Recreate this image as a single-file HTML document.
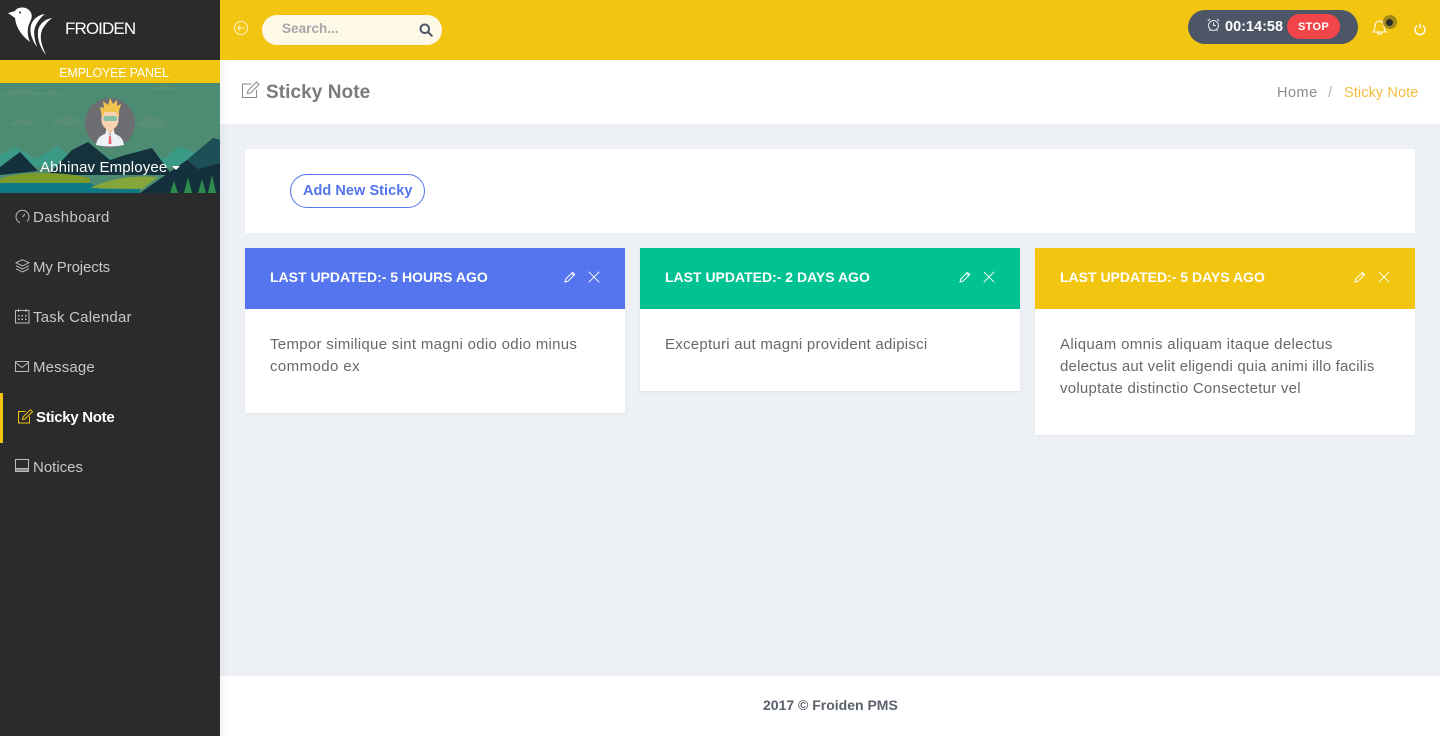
<!DOCTYPE html>
<html lang="en"><head><meta charset="utf-8"><title>Sticky Note</title>
<style>
*{box-sizing:border-box}
html,body{margin:0;padding:0;width:1440px;height:736px;overflow:hidden;background:#edf1f5;font-family:"Liberation Sans",sans-serif}
.a{position:absolute}
.t{position:absolute;white-space:nowrap;line-height:20px}
svg{position:absolute;display:block;overflow:visible}
.nav{color:#c6c8cb;font-size:15px}
.i{fill:none;stroke:#b8babd;stroke-width:1}
.body{color:#686868;font-size:15px}
.hd{color:#fff;font-size:14px;font-weight:700}
.card{position:absolute;top:248px;width:380px;background:#fff;box-shadow:0 1px 3px rgba(0,0,0,.06)}
</style></head><body>
<!-- sidebar -->
<div class="a" style="left:0;top:0;width:220px;height:736px;background:#2b2b2b"></div>
<svg style="left:0;top:0" width="70" height="60" viewBox="0 0 70 60"><g fill="#fff">
<path d="M8 13 L15 11 C17 7 25 6 29 10 C33 14 32 18 30 22 C27 28 27 35 30 42 C22 36 16 28 15 18 Z"/>
<path d="M45 14 C38 15 33 19 31 25 C29 32 32 40 37 47 C34 38 33 30 36 25 C38 21 41 17 45 14Z"/>
<path d="M52 18 C45 19 39 24 38 31 C37 40 41 49 46 55 C42 46 39 38 42 30 C44 26 48 21 52 18Z"/>
</g><circle cx="20" cy="12.500" r="1" fill="#2b2b2b"/></svg>
<div class="t" style="left:65px;top:19px;color:#fff;font-size:17px;letter-spacing:-.9px">FROIDEN</div>
<div class="a" style="left:0;top:60px;width:220px;height:23px;background:#f2c511"></div>
<div class="t" style="left:0;top:63px;width:228px;text-align:center;color:#fff;font-size:12.500px;letter-spacing:-.2px">EMPLOYEE PANEL</div>
<svg style="left:0;top:83px" width="220" height="110" viewBox="0 0 220 110">
<rect width="220" height="110" fill="#4d8b72"/>
<path d="M0 12 C8 6 14 9 20 7 C30 4 34 11 44 10 C50 6 58 7 64 12Z M150 7 C158 1 170 1 178 7Z" fill="#5a9078" opacity=".7"/>
<path d="M50 42 C60 30 78 30 88 44Z M135 44 C145 30 158 30 168 44Z M10 42 C18 34 28 34 36 42Z" fill="#64917a" opacity=".55"/>
<path d="M0 84 L0 72 L16 64 L36 76 L57 63 L72 75 L100 70 L118 78 L140 66 L165 75 L180 63 L200 72 L220 60 L220 84Z" fill="#3b9a86"/>
<path d="M0 84 L20 69 L38 88 L0 92Z" fill="#14303c"/>
<path d="M48 92 L72 67 L88 59 L110 77 L125 72 L152 65 L172 92Z" fill="#15323c"/>
<path d="M140 110 L187 77 L213 55 L220 57 L220 110Z" fill="#14303c"/>
<path d="M187 77 L213 55 L220 57 L220 80 L198 86Z" fill="#1c4f56"/>
<path d="M0 96 C20 88 60 88 90 95 L90 100 L0 101Z" fill="#7d9a2c"/>
<path d="M0 100 L90 100 L100 106 L140 106 L140 110 L0 110Z" fill="#0f7a85"/>
<path d="M90 105 C110 96 130 92 158 94 L142 106Z" fill="#87a63a"/>
<path d="M170 110 L174 98 L178 110 M184 110 L188 94 L192 110 M198 110 L202 96 L206 110 M208 110 L212 92 L216 110Z" fill="#2f8b4e"/>
</svg>
<svg style="left:85px;top:98px" width="50" height="50" viewBox="0 0 50 50">
<circle cx="25" cy="25" r="25" fill="#6d6e72"/>
<path d="M21 29 H29 V36 H21Z" fill="#f2c9a8"/>
<path d="M16.500 14 H33.500 V22 C33.500 28 29 32 25 32 C21 32 16.500 28 16.500 22Z" fill="#f7d3b4"/>
<path d="M17 19 L15 9 L19 10 L18 3 L23 7 L25 0 L28 6 L32 2 L32 8 L36 6 L34 13 L34 19 L31 14 L20 14Z" fill="#f0c24e"/>
<rect x="18.500" y="18" width="13.500" height="5" rx="2" fill="#84c3a3"/>
<path d="M11 47 C12 40 15 38 20 36 L22 31 L25 38 L28 31 L30 36 C35 38 38 40 39 47 C30 49 20 49 11 47Z" fill="#eef2f6"/>
<path d="M24 38 H26 L26.500 46 H23.500Z" fill="#e2686e"/>
</svg>
<div class="t" style="left:40px;top:158px;color:#fff;font-size:15px;letter-spacing:.14px">Abhinav Employee</div>
<div class="a" style="left:172px;top:166px;border:4px solid transparent;border-top:4px solid #fff;border-bottom:0"></div>

<svg style="left:15px;top:209px" width="15" height="15" viewBox="0 0 15 15"><g class="i"><path d="M3 12.500 A6.500 6.500 0 1 1 12 12.500"/><path d="M7.500 8 L10 5"/><path d="M3 12.500 A6.500 6.500 0 0 0 5 13.800"/></g></svg>
<div class="t nav" style="left:33px;top:208px;letter-spacing:.37px">Dashboard</div>
<svg style="left:15px;top:259px" width="15" height="15" viewBox="0 0 15 15"><g class="i"><path d="M7.500 .7 L14 3.800 L7.500 7 L1 3.800Z"/><path d="M1 6.800 L7.500 10 L14 6.800"/><path d="M1 9.800 L7.500 13 L14 9.800"/></g></svg>
<div class="t nav" style="left:33px;top:258px;letter-spacing:-.12px">My Projects</div>
<svg style="left:15px;top:309px" width="15" height="15" viewBox="0 0 15 15"><g class="i"><rect x=".5" y="1.500" width="13.500" height="12.500"/><path d="M3.500 0 V3 M11 0 V3"/></g><g fill="#b8babd"><rect x="3" y="6" width="1.500" height="1.500"/><rect x="6.500" y="6" width="1.500" height="1.500"/><rect x="10" y="6" width="1.500" height="1.500"/><rect x="3" y="9.500" width="1.500" height="1.500"/><rect x="6.500" y="9.500" width="1.500" height="1.500"/><rect x="10" y="9.500" width="1.500" height="1.500"/></g></svg>
<div class="t nav" style="left:33px;top:308px;letter-spacing:.22px">Task Calendar</div>
<svg style="left:15px;top:361px" width="14" height="11" viewBox="0 0 14 11"><g class="i"><rect x=".5" y=".5" width="13" height="10"/><path d="M.5 1.500 L7 6.500 L13.500 1.500"/></g></svg>
<div class="t nav" style="left:33px;top:358px;letter-spacing:.15px">Message</div>
<div class="a" style="left:0;top:393px;width:3px;height:50px;background:#f2c511"></div>
<svg style="left:18px;top:409px" width="15" height="15" viewBox="0 0 15 15"><g fill="none" stroke="#f2c511" stroke-width="1"><path d="M7.500 2.500 H.5 V14 H11.500 V7.500"/><path d="M4.500 10.500 L5 8 L12.500 .7 L14.500 2.700 L7 10Z"/></g></svg>
<div class="t" style="left:36px;top:408px;color:#fff;font-size:15px;font-weight:700;letter-spacing:-.3px">Sticky Note</div>
<svg style="left:15px;top:459px" width="14" height="13" viewBox="0 0 14 13"><g class="i"><rect x=".5" y=".5" width="13" height="12"/><path d="M.5 9.500 H13.500"/></g><rect x="1" y="10" width="12" height="2" fill="#8a8b8d"/></svg>
<div class="t nav" style="left:33px;top:458px;letter-spacing:0">Notices</div>

<!-- topbar -->
<div class="a" style="left:220px;top:0;width:1220px;height:60px;background:#f2c511"></div>
<svg style="left:234px;top:21px" width="14" height="14" viewBox="0 0 14 14"><g fill="none" stroke="#fff2c0" stroke-width="1"><circle cx="7" cy="7" r="6.500"/><path d="M10.500 7 H3.800 M6.300 4.500 L3.800 7 L6.300 9.500"/></g></svg>
<div class="a" style="left:262px;top:15px;width:180px;height:30px;border-radius:15px;background:#fef8e7"></div>
<div class="t" style="left:282px;top:19px;color:#a5a7aa;font-size:13.500px;font-weight:700;letter-spacing:.05px">Search...</div>
<svg style="left:419px;top:23px" width="14" height="14" viewBox="0 0 14 14"><g fill="none" stroke="#4c5667" stroke-width="2"><circle cx="5.800" cy="5.800" r="4.300"/><path d="M9 9 L12.800 12.800" stroke-linecap="round"/></g></svg>

<div class="a" style="left:1188px;top:10px;width:170px;height:34px;border-radius:17px;background:#4c5667"></div>
<svg style="left:1207px;top:18px" width="13" height="14" viewBox="0 0 13 14"><g fill="none" stroke="#e5e7ea" stroke-width="1"><circle cx="6.500" cy="7.500" r="5"/><path d="M6.500 4.500 V7.500 H9 M2.500 13 L3.500 11.500 M10.500 13 L9.500 11.500 M.7 3 L3 .8 M12.300 3 L10 .8"/></g></svg>
<div class="t" style="left:1225px;top:17px;color:#fff;font-size:14.500px;font-weight:700;letter-spacing:0">00:14:58</div>
<div class="a" style="left:1287px;top:14px;width:53px;height:25px;border-radius:13px;background:#f1454a"></div>
<div class="t" style="left:1287px;top:17px;width:53px;text-align:center;color:#fff;font-size:11px;font-weight:700;letter-spacing:.3px">STOP</div>
<svg style="left:1372px;top:20px" width="15" height="15" viewBox="0 0 15 15"><g fill="none" stroke="#fff" stroke-width="1"><path d="M1 12 C3 10 3 8 3 6 C3 3 5 1 7.500 1 C10 1 12 3 12 6 C12 8 12 10 14 12Z"/><path d="M5.500 12.500 C5.500 15 9.500 15 9.500 12.500"/></g></svg>
<div class="a" style="left:1383px;top:15px;width:14px;height:14px;border-radius:50%;background:#a08a1a"></div>
<div class="a" style="left:1386px;top:19px;width:7px;height:7px;border-radius:50%;background:#2b2b2b"></div>
<svg style="left:1414px;top:23px" width="12" height="12" viewBox="0 0 12 12"><g fill="none" stroke="#fff" stroke-width="1.300"><path d="M3.300 2.500 A5 5 0 1 0 8.700 2.500"/><path d="M6 .5 V5.500"/></g></svg>

<!-- title bar -->
<div class="a" style="left:220px;top:60px;width:1220px;height:64px;background:#fff"></div>
<svg style="left:242px;top:81px" width="18" height="18" viewBox="0 0 18 18"><g fill="none" stroke="#8a8a8a" stroke-width="1"><path d="M9.500 3 H.5 V16.500 H14.500 V9"/><path d="M5.500 12.500 L6 9.500 L14.500 1 L17 3.500 L8.500 12Z"/></g></svg>
<div class="t" style="left:266px;top:83px;color:#7b7b7b;font-size:19px;font-weight:700;letter-spacing:.07px">Sticky Note</div>
<div class="t" style="left:1277px;top:83px;color:#8a8a8a;font-size:14.500px;letter-spacing:.5px">Home</div>
<div class="t" style="left:1328px;top:83px;color:#aeb6bf;font-size:15px">/</div>
<div class="t" style="left:1344px;top:83px;color:#f5bd3c;font-size:14.500px;letter-spacing:.1px">Sticky Note</div>

<!-- add panel -->
<div class="a" style="left:245px;top:149px;width:1170px;height:84px;background:#fff"></div>
<div class="a" style="left:290px;top:174px;width:135px;height:34px;border:1px solid #5475ed;border-radius:17px"></div>
<div class="t" style="left:303px;top:181px;color:#5475ed;font-size:14.500px;font-weight:700;letter-spacing:.05px">Add New Sticky</div>

<!-- cards -->
<div class="card" style="left:245px;height:165px"><div class="a" style="left:0;top:0;width:380px;height:61px;background:#5475ed"></div></div>
<div class="t hd" style="left:270px;top:267px">LAST UPDATED:- 5 HOURS AGO</div>
<svg style="left:564px;top:271px" width="12" height="12" viewBox="0 0 12 12"><g fill="none" stroke="#fff" stroke-width="1"><path d="M1 11 L1.800 8 L8.500 1.300 L10.700 3.500 L4 10.200Z M7.500 2.300 L9.700 4.500"/></g></svg>
<svg style="left:588px;top:271px" width="12" height="12" viewBox="0 0 12 12"><path d="M.7 .7 L11.300 11.300 M11.300 .7 L.7 11.300" stroke="#fff" stroke-width=".9" fill="none"/></svg>
<div class="t body" style="left:270px;top:335px;letter-spacing:.3px">Tempor similique sint magni odio odio minus</div>
<div class="t body" style="left:270px;top:357px;letter-spacing:.42px">commodo ex</div>

<div class="card" style="left:640px;height:143px"><div class="a" style="left:0;top:0;width:380px;height:61px;background:#00c292"></div></div>
<div class="t hd" style="left:665px;top:267px">LAST UPDATED:- 2 DAYS AGO</div>
<svg style="left:959px;top:271px" width="12" height="12" viewBox="0 0 12 12"><g fill="none" stroke="#fff" stroke-width="1"><path d="M1 11 L1.800 8 L8.500 1.300 L10.700 3.500 L4 10.200Z M7.500 2.300 L9.700 4.500"/></g></svg>
<svg style="left:983px;top:271px" width="12" height="12" viewBox="0 0 12 12"><path d="M.7 .7 L11.300 11.300 M11.300 .7 L.7 11.300" stroke="#fff" stroke-width=".9" fill="none"/></svg>
<div class="t body" style="left:665px;top:335px;letter-spacing:.26px">Excepturi aut magni provident adipisci</div>

<div class="card" style="left:1035px;height:187px"><div class="a" style="left:0;top:0;width:380px;height:61px;background:#f2c511"></div></div>
<div class="t hd" style="left:1060px;top:267px">LAST UPDATED:- 5 DAYS AGO</div>
<svg style="left:1354px;top:271px" width="12" height="12" viewBox="0 0 12 12"><g fill="none" stroke="#fff" stroke-width="1"><path d="M1 11 L1.800 8 L8.500 1.300 L10.700 3.500 L4 10.200Z M7.500 2.300 L9.700 4.500"/></g></svg>
<svg style="left:1378px;top:271px" width="12" height="12" viewBox="0 0 12 12"><path d="M.7 .7 L11.300 11.300 M11.300 .7 L.7 11.300" stroke="#fff" stroke-width=".9" fill="none"/></svg>
<div class="t body" style="left:1060px;top:335px;letter-spacing:.34px">Aliquam omnis aliquam itaque delectus</div>
<div class="t body" style="left:1060px;top:357px;letter-spacing:.2px">delectus aut velit eligendi quia animi illo facilis</div>
<div class="t body" style="left:1060px;top:379px;letter-spacing:.25px">voluptate distinctio Consectetur vel</div>

<!-- footer -->
<div class="a" style="left:220px;top:676px;width:1220px;height:60px;background:#fff"></div>
<div class="t" style="left:763px;top:695px;color:#5a616b;font-size:14px;font-weight:700">2017 © Froiden PMS</div>
<div class="a" style="left:220px;top:60px;width:8px;height:676px;background:linear-gradient(90deg,rgba(0,0,0,.04),rgba(0,0,0,0))"></div>
</body></html>
